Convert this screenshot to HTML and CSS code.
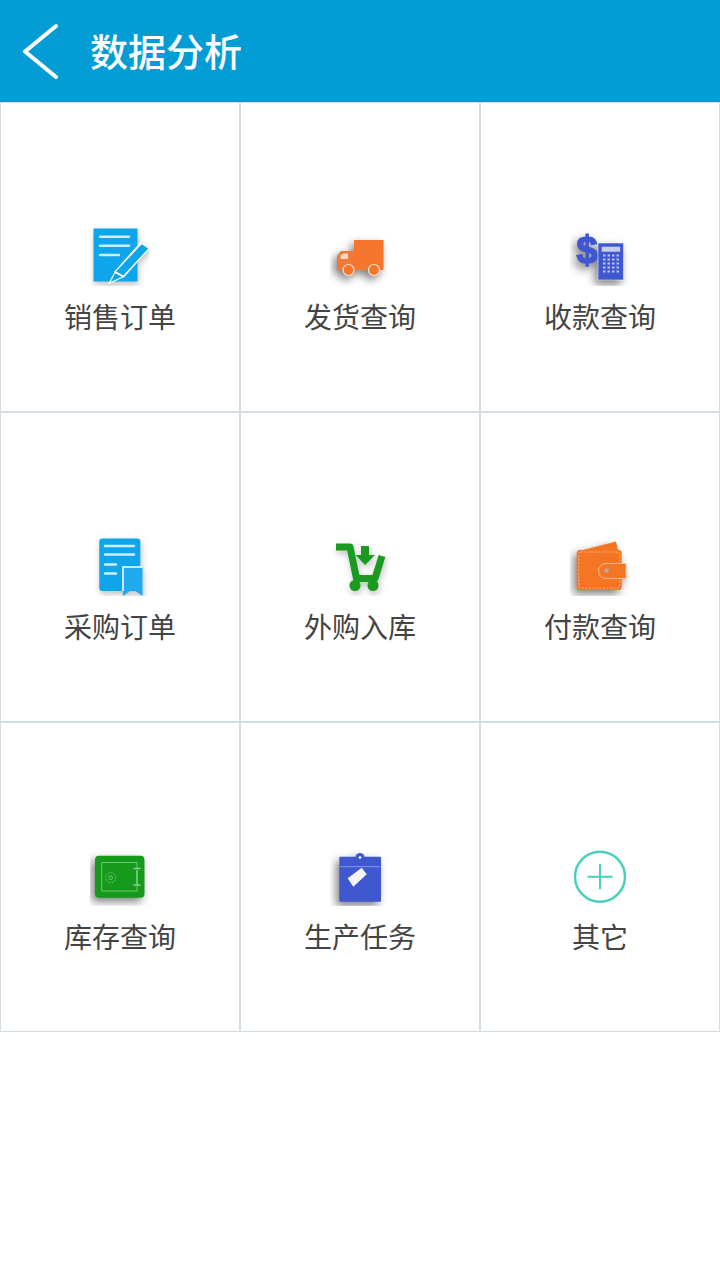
FILE: index.html
```html
<!DOCTYPE html>
<html lang="zh-CN">
  <head>
    <meta charset="UTF-8" />
    <meta name="viewport" content="width=device-width, initial-scale=1" />
    <title>数据分析</title>
    <link rel="stylesheet" href="styles.css">
  </head>
  <body>
    <header class="topbar">
      <svg class="back" viewBox="0 0 40 60" width="40" height="60">
        <path d="M33 5 L2 30.500 L33 56" fill="none" stroke="#fff" stroke-width="4" stroke-linecap="round" stroke-linejoin="round" />
      </svg>
      <h1>数据分析</h1>
    </header>

    <div class="menu">
      <a class="cell">
        <svg class="icon" viewBox="0 0 60 60">
          <g class="soft">
            <rect x="3.500" y="2.500" width="44" height="53" fill="#0ea5ea" />
            <path d="M10 10.700H39M10 19.700H39M10 29H29" stroke="#cfeefb" stroke-width="2.500" stroke-linecap="round" />
            <path d="M25 46.300 L19.300 57.300 L33.300 50.700 Z" fill="#0ea5ea" stroke="#fff" stroke-width="1.200" />
            <path d="M50.500 16 L59.800 22.300 L34 51.500 L24 46 Z" fill="#fff" />
            <path d="M51.700 18.300 L58.300 22.500 L33.300 49.500 L26 45.500 Z" fill="#0ea5ea" />
          </g>
        </svg>
        <span class="label">销售订单</span>
      </a>

      <a class="cell">
        <svg class="icon" viewBox="0 0 60 60">
          <g class="soft dark">
            <rect x="24" y="14" width="29.500" height="27" fill="#f4752b" />
            <path d="M7 44 V30 L11 25 H23 V41 H53.500 V44 Z" fill="#f0783a" />
            <path d="M10.500 33 V29.500 L13 27.500 H18 V33 Z" fill="#f9d6c0" />
            <circle cx="18.500" cy="44" r="5.500" fill="#f4752b" stroke="#fbe3d4" stroke-width="1.200" />
            <circle cx="44" cy="44" r="5.500" fill="#f4752b" stroke="#fbe3d4" stroke-width="1.200" />
          </g>
        </svg>
        <span class="label">发货查询</span>
      </a>

      <a class="cell">
        <svg class="icon" viewBox="0 0 60 60">
          <g class="soft dark">
            <text class="dollar" x="17" y="37" text-anchor="middle">$</text>
            <rect x="28" y="17" width="25.500" height="37" fill="#3f58d0" stroke="#fff" stroke-width="0.500" />
            <rect x="31.700" y="20.700" width="18.500" height="5" fill="#c9cfe6" />
            <path d="M33 29.500H50M33 33.500H50M33 37.500H50M33 41.500H50M33 45.500H50" stroke="#b8c2ee" stroke-width="2.200" stroke-dasharray="2.500 2" />
          </g>
        </svg>
        <span class="label">收款查询</span>
      </a>

      <a class="cell">
        <svg class="icon" viewBox="0 0 60 60">
          <g class="soft">
            <rect x="9.300" y="2.500" width="41" height="52.500" rx="3" fill="#0ea5ea" />
            <path d="M15 10H44M15 18.500H44M15 28.500H26M15 37.500H26" stroke="#cfeefb" stroke-width="2.500" stroke-linecap="round" />
            <path d="M33 31 H52.500 V60 L42.700 53 L33 60 Z" fill="#1fa9ee" />
            <path d="M33 55 V31 H52.500" fill="none" stroke="#fff" stroke-width="1.500" />
          </g>
        </svg>
        <span class="label">采购订单</span>
      </a>

      <a class="cell">
        <svg class="icon" viewBox="0 0 60 60">
          <g class="soft">
            <path d="M6 11 H20 L26.500 42.500 H45 L52 20" fill="none" stroke="#1a9a1f" stroke-width="7" stroke-linejoin="round" />
            <circle cx="25" cy="49.500" r="5.500" fill="#1a9a1f" />
            <circle cx="43" cy="49.500" r="5.500" fill="#1a9a1f" />
            <path d="M31 10 H39 V19 H45 L35 29 L25.500 19 H31 Z" fill="#1a9a1f" />
          </g>
        </svg>
        <span class="label">外购入库</span>
      </a>

      <a class="cell">
        <svg class="icon" viewBox="0 0 60 60">
          <g class="soft dark">
            <path d="M13 14 L46 5.500 L48 14 Z" fill="#f47524" />
            <rect x="6.700" y="14" width="45" height="40" rx="3" fill="#f47524" />
            <rect x="8.700" y="16" width="41" height="36" rx="2" fill="none" stroke="#f9c6a4" stroke-width="0.800" stroke-dasharray="2 1.500" />
            <path d="M56 27.500 H36 A7.500 7.500 0 0 0 36 42.500 H56 Z" fill="#f47524" stroke="#f9c6a4" stroke-width="0.800" />
            <circle cx="36.700" cy="34.500" r="2.200" fill="#b9a99c" />
          </g>
        </svg>
        <span class="label">付款查询</span>
      </a>

      <a class="cell">
        <svg class="icon" viewBox="0 0 60 60">
          <g class="soft dark">
            <rect x="5" y="9.700" width="49.500" height="42" rx="4" fill="#159a1c" />
            <path d="M47 22 V16.500 H11.700 V45 H47 V39" fill="none" stroke="#8fd092" stroke-width="0.800" />
            <circle cx="20.700" cy="31.700" r="5" fill="none" stroke="#8fd092" stroke-width="0.800" stroke-dasharray="1.500 1" />
            <circle cx="20.700" cy="31.700" r="1.800" fill="none" stroke="#8fd092" stroke-width="0.800" />
            <path d="M47 24 V38M43.500 22.500 H50.500M43.500 39 H50.500" stroke="#8fd092" stroke-width="1.500" />
          </g>
        </svg>
        <span class="label">库存查询</span>
      </a>

      <a class="cell">
        <svg class="icon" viewBox="0 0 60 60">
          <g class="soft dark">
            <rect x="9.300" y="10.700" width="41.700" height="45" rx="1" fill="#3f58d0" />
            <circle cx="30" cy="11.500" r="4.500" fill="#3f58d0" />
            <circle cx="30" cy="11.500" r="1.300" fill="#fff" />
            <path d="M10 20.700 H50" stroke="#aab6ea" stroke-width="0.700" />
            <path d="M31.700 21.700 L36.700 28.300 L23.300 40.700 L17.700 32.300 Z" fill="#f4f5fb" />
          </g>
        </svg>
        <span class="label">生产任务</span>
      </a>

      <a class="cell">
        <svg class="icon" viewBox="0 0 60 60">
          <circle cx="30" cy="30.700" r="25" fill="none" stroke="#4ad0bb" stroke-width="2.500" />
          <path d="M17.500 30.700 H42.500 M30 18.200 V43.200" stroke="#4ad0bb" stroke-width="2" />
        </svg>
        <span class="label">其它</span>
      </a>
    </div>
  </body>
</html>
```

FILE: styles.css
```css
* {
  margin: 0;
  padding: 0;
  box-sizing: border-box;
}
body {
  background: #fff;
  font-family: "Noto Sans CJK SC", "Noto Sans", sans-serif;
}
.topbar {
  height: 102px;
  background: #049cd4;
  display: flex;
  align-items: center;
  padding-left: 23px;
}
.back {
  display: block;
  flex: none;
}
.topbar h1 {
  margin-left: 27px;
  margin-bottom: 3px;
  color: #fff;
  font-size: 38px;
  font-weight: 500;
  line-height: 1;
}
.menu {
  display: grid;
  grid-template-columns: repeat(3, 240px);
  grid-auto-rows: 310px;
}
.cell {
  border: 1px solid #d3dee4;
  display: flex;
  flex-direction: column;
  align-items: center;
  padding-top: 123px;
}
.icon {
  display: block;
  width: 60px;
  height: 60px;
}
.soft {
  filter: blur(0.4px) drop-shadow(1px 3px 3px rgba(0, 0, 0, 0.25));
}
.soft.dark {
  filter: blur(0.4px) drop-shadow(-3px 4px 4px rgba(0, 0, 0, 0.5));
}
.dollar {
  font-family: "Liberation Sans", sans-serif;
  font-size: 38px;
  font-weight: 700;
  fill: #3f58d0;
  stroke: #3f58d0;
  stroke-width: 1.5px;
}
.label {
  margin-top: 11px;
  color: #444;
  font-size: 28px;
  line-height: 38px;
}
```
